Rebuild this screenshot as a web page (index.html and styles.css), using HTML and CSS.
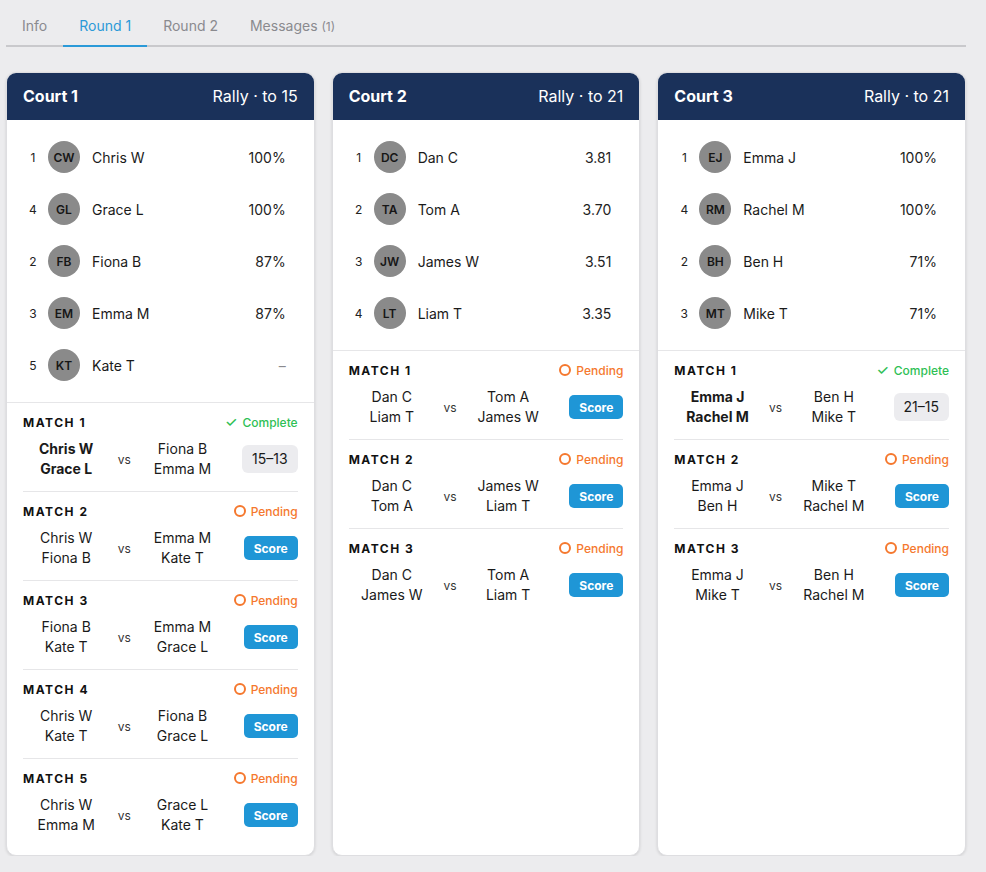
FILE: index.html
```html
<!DOCTYPE html>
<html lang="en">
<head>
    <meta charset="UTF-8">
    <meta name="viewport" content="width=device-width, initial-scale=1.0">
    <title>Round 1 - Courts</title>
    <link rel="stylesheet" href="styles.css">
</head>
<body>
    <div class="page">
        <nav class="tabs">
            <div class="tab">Info</div>
            <div class="tab active">Round 1</div>
            <div class="tab">Round 2</div>
            <div class="tab">Messages <span class="tab-count">(1)</span></div>
        </nav>

        <div class="courts">
            <!-- Court 1 -->
            <div class="court-card">
                <div class="court-header">
                    <div class="court-name">Court 1</div>
                    <div class="court-format">Rally · to 15</div>
                </div>
                <div class="player-list">
                    <div class="player-row"><span class="player-rank">1</span><span class="player-avatar">CW</span><span class="player-name">Chris W</span><span class="player-stat">100%</span></div>
                    <div class="player-row"><span class="player-rank">4</span><span class="player-avatar">GL</span><span class="player-name">Grace L</span><span class="player-stat">100%</span></div>
                    <div class="player-row"><span class="player-rank">2</span><span class="player-avatar">FB</span><span class="player-name">Fiona B</span><span class="player-stat">87%</span></div>
                    <div class="player-row"><span class="player-rank">3</span><span class="player-avatar">EM</span><span class="player-name">Emma M</span><span class="player-stat">87%</span></div>
                    <div class="player-row"><span class="player-rank">5</span><span class="player-avatar">KT</span><span class="player-name">Kate T</span><span class="player-stat muted">–</span></div>
                </div>
                <div class="match-list">
                    <div class="match">
                        <div class="match-top"><span class="match-label">Match 1</span><span class="match-status complete"><i class="check">✓</i>Complete</span></div>
                        <div class="match-teams">
                            <div class="team winner">Chris W<br>Grace L</div>
                            <div class="vs">vs</div>
                            <div class="team">Fiona B<br>Emma M</div>
                            <div class="score-chip">15–13</div>
                        </div>
                    </div>
                    <div class="match">
                        <div class="match-top"><span class="match-label">Match 2</span><span class="match-status pending"><i class="ring"></i>Pending</span></div>
                        <div class="match-teams">
                            <div class="team">Chris W<br>Fiona B</div>
                            <div class="vs">vs</div>
                            <div class="team">Emma M<br>Kate T</div>
                            <button class="score-btn">Score</button>
                        </div>
                    </div>
                    <div class="match">
                        <div class="match-top"><span class="match-label">Match 3</span><span class="match-status pending"><i class="ring"></i>Pending</span></div>
                        <div class="match-teams">
                            <div class="team">Fiona B<br>Kate T</div>
                            <div class="vs">vs</div>
                            <div class="team">Emma M<br>Grace L</div>
                            <button class="score-btn">Score</button>
                        </div>
                    </div>
                    <div class="match">
                        <div class="match-top"><span class="match-label">Match 4</span><span class="match-status pending"><i class="ring"></i>Pending</span></div>
                        <div class="match-teams">
                            <div class="team">Chris W<br>Kate T</div>
                            <div class="vs">vs</div>
                            <div class="team">Fiona B<br>Grace L</div>
                            <button class="score-btn">Score</button>
                        </div>
                    </div>
                    <div class="match">
                        <div class="match-top"><span class="match-label">Match 5</span><span class="match-status pending"><i class="ring"></i>Pending</span></div>
                        <div class="match-teams">
                            <div class="team">Chris W<br>Emma M</div>
                            <div class="vs">vs</div>
                            <div class="team">Grace L<br>Kate T</div>
                            <button class="score-btn">Score</button>
                        </div>
                    </div>
                </div>
            </div>

            <!-- Court 2 -->
            <div class="court-card">
                <div class="court-header">
                    <div class="court-name">Court 2</div>
                    <div class="court-format">Rally · to 21</div>
                </div>
                <div class="player-list">
                    <div class="player-row"><span class="player-rank">1</span><span class="player-avatar">DC</span><span class="player-name">Dan C</span><span class="player-stat">3.81</span></div>
                    <div class="player-row"><span class="player-rank">2</span><span class="player-avatar">TA</span><span class="player-name">Tom A</span><span class="player-stat">3.70</span></div>
                    <div class="player-row"><span class="player-rank">3</span><span class="player-avatar">JW</span><span class="player-name">James W</span><span class="player-stat">3.51</span></div>
                    <div class="player-row"><span class="player-rank">4</span><span class="player-avatar">LT</span><span class="player-name">Liam T</span><span class="player-stat">3.35</span></div>
                </div>
                <div class="match-list">
                    <div class="match">
                        <div class="match-top"><span class="match-label">Match 1</span><span class="match-status pending"><i class="ring"></i>Pending</span></div>
                        <div class="match-teams">
                            <div class="team">Dan C<br>Liam T</div>
                            <div class="vs">vs</div>
                            <div class="team">Tom A<br>James W</div>
                            <button class="score-btn">Score</button>
                        </div>
                    </div>
                    <div class="match">
                        <div class="match-top"><span class="match-label">Match 2</span><span class="match-status pending"><i class="ring"></i>Pending</span></div>
                        <div class="match-teams">
                            <div class="team">Dan C<br>Tom A</div>
                            <div class="vs">vs</div>
                            <div class="team">James W<br>Liam T</div>
                            <button class="score-btn">Score</button>
                        </div>
                    </div>
                    <div class="match">
                        <div class="match-top"><span class="match-label">Match 3</span><span class="match-status pending"><i class="ring"></i>Pending</span></div>
                        <div class="match-teams">
                            <div class="team">Dan C<br>James W</div>
                            <div class="vs">vs</div>
                            <div class="team">Tom A<br>Liam T</div>
                            <button class="score-btn">Score</button>
                        </div>
                    </div>
                </div>
            </div>

            <!-- Court 3 -->
            <div class="court-card">
                <div class="court-header">
                    <div class="court-name">Court 3</div>
                    <div class="court-format">Rally · to 21</div>
                </div>
                <div class="player-list">
                    <div class="player-row"><span class="player-rank">1</span><span class="player-avatar">EJ</span><span class="player-name">Emma J</span><span class="player-stat">100%</span></div>
                    <div class="player-row"><span class="player-rank">4</span><span class="player-avatar">RM</span><span class="player-name">Rachel M</span><span class="player-stat">100%</span></div>
                    <div class="player-row"><span class="player-rank">2</span><span class="player-avatar">BH</span><span class="player-name">Ben H</span><span class="player-stat">71%</span></div>
                    <div class="player-row"><span class="player-rank">3</span><span class="player-avatar">MT</span><span class="player-name">Mike T</span><span class="player-stat">71%</span></div>
                </div>
                <div class="match-list">
                    <div class="match">
                        <div class="match-top"><span class="match-label">Match 1</span><span class="match-status complete"><i class="check">✓</i>Complete</span></div>
                        <div class="match-teams">
                            <div class="team winner">Emma J<br>Rachel M</div>
                            <div class="vs">vs</div>
                            <div class="team">Ben H<br>Mike T</div>
                            <div class="score-chip">21–15</div>
                        </div>
                    </div>
                    <div class="match">
                        <div class="match-top"><span class="match-label">Match 2</span><span class="match-status pending"><i class="ring"></i>Pending</span></div>
                        <div class="match-teams">
                            <div class="team">Emma J<br>Ben H</div>
                            <div class="vs">vs</div>
                            <div class="team">Mike T<br>Rachel M</div>
                            <button class="score-btn">Score</button>
                        </div>
                    </div>
                    <div class="match">
                        <div class="match-top"><span class="match-label">Match 3</span><span class="match-status pending"><i class="ring"></i>Pending</span></div>
                        <div class="match-teams">
                            <div class="team">Emma J<br>Mike T</div>
                            <div class="vs">vs</div>
                            <div class="team">Ben H<br>Rachel M</div>
                            <button class="score-btn">Score</button>
                        </div>
                    </div>
                </div>
            </div>
        </div>
    </div>
</body>
</html>
```

FILE: styles.css
```css
* {
    box-sizing: border-box;
    margin: 0;
    padding: 0;
    font-family: Inter, 'Noto Sans', 'Liberation Sans', sans-serif;
}

body {
    background: #ececee;
    color: #1a1a1a;
}

.page {
    width: 960px;
    margin-left: 6px;
    padding-top: 6px;
}

/* Tabs */
.tabs {
    display: flex;
    border-bottom: 2px solid #c9c9cc;
}

.tab {
    padding: 10px 16px 8px;
    font-size: 14px;
    line-height: 20px;
    color: #8a8a8e;
    border-bottom: 2px solid transparent;
    margin-bottom: -2px;
}

.tab.active {
    color: #2b9ad8;
    border-bottom-color: #2b9ad8;
}

.tab-count {
    font-size: 12px;
}

/* Court cards */
.courts {
    display: grid;
    grid-template-columns: repeat(3, 1fr);
    gap: 17px;
    margin-top: 25px;
    align-items: stretch;
}

.court-card {
    background: #fff;
    border: 1px solid #dedee1;
    border-radius: 10px;
    box-shadow: 0 1px 3px rgba(0, 0, 0, 0.12);
    overflow: hidden;
    padding-bottom: 8px;
}

.court-header {
    display: flex;
    justify-content: space-between;
    align-items: center;
    height: 48px;
    margin: -1px -1px 0;
    padding: 0 17px;
    background: #1a315a;
    color: #fff;
    font-size: 16px;
}

.court-name {
    font-weight: 700;
}

/* Player standings */
.player-list {
    padding: 11px 0;
    border-bottom: 1px solid #e6e6e8;
}

.player-row {
    display: flex;
    align-items: center;
    height: 52px;
    padding: 0 28px 0 19px;
    font-size: 14px;
}

.player-rank {
    width: 14px;
    text-align: center;
    font-size: 12px;
    color: #222;
}

.player-avatar {
    width: 32px;
    height: 32px;
    margin: 0 12px 0 8px;
    border-radius: 50%;
    background: #8a8a8a;
    color: #161616;
    font-size: 12px;
    font-weight: 600;
    display: flex;
    align-items: center;
    justify-content: center;
}

.player-name {
    flex: 1;
}

.player-stat {
    color: #222;
}

.player-stat.muted {
    color: #8a8a8e;
}

/* Matches */
.match-list {
    padding: 0 16px;
}

.match {
    padding: 11px 0 12px;
    border-bottom: 1px solid #e6e6e8;
}

.match:last-child {
    border-bottom: none;
}

.match-top {
    display: flex;
    justify-content: space-between;
    align-items: center;
    height: 16px;
    margin-bottom: 9px;
}

.match-label {
    font-size: 12px;
    font-weight: 700;
    letter-spacing: 1.5px;
    text-transform: uppercase;
    color: #111;
}

.match-status {
    display: flex;
    align-items: center;
    gap: 5px;
    font-size: 12px;
    font-weight: 500;
}

.match-status.complete {
    color: #2fbf55;
}

.match-status.pending {
    color: #f5782e;
}

.check {
    font-style: normal;
    font-size: 14px;
    line-height: 16px;
}

.ring {
    width: 12px;
    height: 12px;
    border: 2px solid #f5782e;
    border-radius: 50%;
}

.match-teams {
    display: grid;
    grid-template-columns: 1fr 30px 1fr 72px;
    align-items: center;
}

.team {
    text-align: center;
    font-size: 14px;
    line-height: 20px;
    color: #1a1a1a;
}

.team.winner {
    font-weight: 700;
}

.vs {
    text-align: center;
    font-size: 12px;
    color: #333;
}

.score-chip {
    justify-self: end;
    height: 28px;
    line-height: 28px;
    padding: 0 10px;
    border-radius: 6px;
    background: #ececef;
    font-size: 14px;
    color: #1a1a1a;
}

.score-btn {
    justify-self: end;
    height: 24px;
    padding: 0 10px;
    border: none;
    border-radius: 5px;
    background: #1f96d6;
    color: #fff;
    font-size: 12px;
    font-weight: 700;
}
```
